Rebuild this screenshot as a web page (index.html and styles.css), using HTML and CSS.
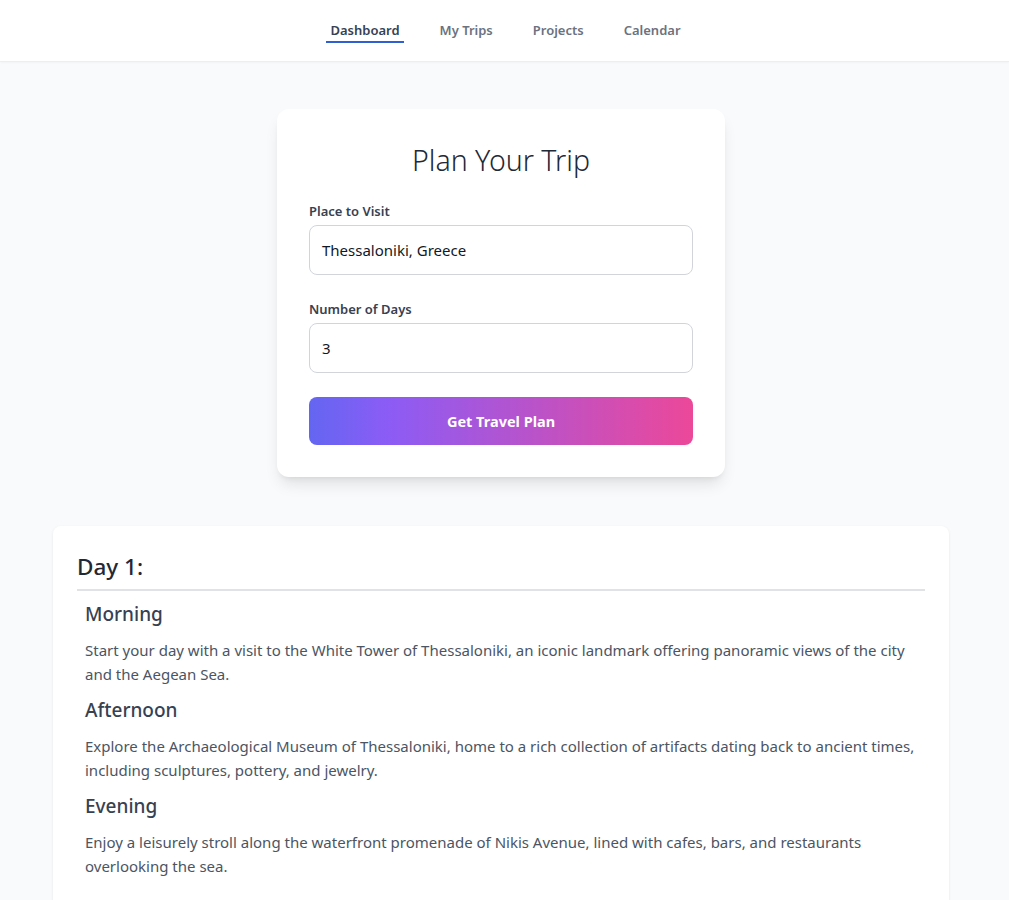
FILE: index.html
```html
<!DOCTYPE html>
<html lang="en">
<head>
<meta charset="utf-8">
<title>Plan Your Trip</title>
<link rel="stylesheet" href="styles.css">
</head>
<body>
<header class="topbar">
  <nav class="nav">
    <a class="nav-link active" href="#">Dashboard</a>
    <a class="nav-link" href="#">My Trips</a>
    <a class="nav-link" href="#">Projects</a>
    <a class="nav-link" href="#">Calendar</a>
  </nav>
</header>
<main class="main">
  <section class="plan-card">
    <h1 class="plan-title">Plan Your Trip</h1>
    <div class="field">
      <label class="field-label">Place to Visit</label>
      <div class="field-input">Thessaloniki, Greece</div>
    </div>
    <div class="field">
      <label class="field-label">Number of Days</label>
      <div class="field-input">3</div>
    </div>
    <button class="plan-btn">Get Travel Plan</button>
  </section>
  <section class="result-card">
    <h2 class="day-title">Day 1:</h2>
    <div class="day-body">
      <h3 class="slot-title">Morning</h3>
      <p class="slot-text">Start your day with a visit to the White Tower of Thessaloniki, an iconic landmark offering panoramic views of the city and the Aegean Sea.</p>
      <h3 class="slot-title">Afternoon</h3>
      <p class="slot-text">Explore the Archaeological Museum of Thessaloniki, home to a rich collection of artifacts dating back to ancient times, including sculptures, pottery, and jewelry.</p>
      <h3 class="slot-title">Evening</h3>
      <p class="slot-text">Enjoy a leisurely stroll along the waterfront promenade of Nikis Avenue, lined with cafes, bars, and restaurants overlooking the sea.</p>
    </div>
  </section>
</main>
</body>
</html>
```
FILE: styles.css
```css
* { box-sizing: border-box; }
html, body { margin: 0; padding: 0; }
body {
  background: #f9fafb;
  font-family: "Noto Sans", "Open Sans", sans-serif;
  color: #1f2937;
}
.topbar {
  background: #fff;
  height: 62px;
  border-bottom: 1px solid #eceef1;
  box-shadow: 0 1px 2px rgba(0,0,0,0.03);
  display: flex;
  justify-content: center;
  align-items: flex-start;
  padding-left: 2px;
}
.nav {
  display: flex;
  gap: 32px;
  padding-top: 20px;
}
.nav-link {
  font-size: 13px;
  font-weight: 600;
  color: #6b7280;
  text-decoration: none;
  padding: 0 4px 1px;
  line-height: 20px;
  border-bottom: 2px solid transparent;
}
.nav-link.active {
  color: #374151;
  border-bottom-color: #2f5fd0;
}
.main {
  padding-top: 47px;
  padding-right: 7px;
  padding-bottom: 40px;
  display: flex;
  flex-direction: column;
  align-items: center;
}
.plan-card {
  width: 448px;
  background: #fff;
  border-radius: 12px;
  box-shadow: 0 10px 15px -3px rgba(0,0,0,0.1), 0 4px 6px -4px rgba(0,0,0,0.1);
  padding: 32px;
}
.plan-title {
  margin: 0 0 22px;
  text-align: center;
  font-size: 28.5px;
  font-weight: 300;
  line-height: 38px;
  color: #1f2937;
}
.field { margin-bottom: 24px; }
.field-label {
  display: block;
  font-size: 13px;
  font-weight: 600;
  color: #374151;
  line-height: 20px;
  margin-bottom: 4px;
}
.field-input {
  height: 50px;
  border: 1px solid #d1d5db;
  border-radius: 8px;
  padding: 0 12px;
  display: flex;
  align-items: center;
  font-size: 15px;
  color: #111827;
}
.plan-btn {
  display: block;
  width: 100%;
  height: 48px;
  border: 0;
  border-radius: 8px;
  background: linear-gradient(90deg, #6366f1 0%, #8b5cf6 20%, #ec4899 100%);
  color: #fff;
  font-family: inherit;
  font-size: 14.5px;
  font-weight: 700;
}
.result-card {
  margin-top: 49px;
  width: 896px;
  background: #fff;
  border-radius: 8px;
  box-shadow: 0 1px 3px rgba(0,0,0,0.08);
  padding: 19px 24px 40px;
}
.day-title {
  margin: 0;
  font-size: 22.5px;
  font-weight: 500;
  line-height: 44px;
  color: #1f2937;
  border-bottom: 2px solid #e0e2e6;
}
.day-body { padding: 0 8px; }
.slot-title {
  margin: 10px 0 10px;
  font-size: 19px;
  font-weight: 500;
  line-height: 28px;
  color: #374151;
}
.slot-title:first-child { margin-top: 9px; }
.slot-text {
  margin: 0;
  font-size: 15px;
  line-height: 24px;
  color: #4b5563;
}
```
